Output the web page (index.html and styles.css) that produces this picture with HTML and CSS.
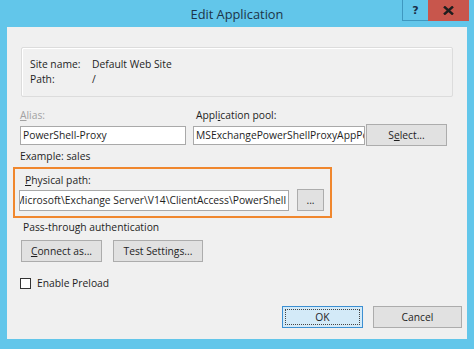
FILE: index.html
```html
<!DOCTYPE html>
<html lang="en">
<head>
  <meta charset="UTF-8" />
  <title>Edit Application</title>
  <link rel="stylesheet" href="styles.css">
</head>
<body>
  <div class="window">
    <!-- title bar -->
    <div class="titlebar">
      <span></span>
      <span class="title">Edit Application</span>
      <div class="controls">
        <button class="ctl help">?</button>
        <button class="ctl close">
          <svg width="11" height="9" viewBox="0 0 11 9"><path d="M1 0.5 L10 8.5 M10 0.5 L1 8.5" stroke="#1e1e1e" stroke-width="2.4"/></svg>
        </button>
      </div>
    </div>

    <div class="client">
      <!-- site info -->
      <div class="group">
        <div class="info-row"><span class="info-key">Site name:</span><span>Default Web Site</span></div>
        <div class="info-row"><span class="info-key">Path:</span><span>/</span></div>
      </div>

      <div class="alias-grid">
        <label class="lbl disabled"><u>A</u>lias:</label>
        <label class="lbl pool-lbl">Appl<u>i</u>cation pool:</label>
        <span></span>
        <div class="textbox alias-box">PowerShell-Proxy</div>
        <div class="textbox pool-box">MSExchangePowerShellProxyAppPool</div>
        <button class="btn select-btn">S<u>e</u>lect...</button>
      </div>
      <div class="hint">Example: sales</div>

      <!-- highlighted -->
      <div class="highlight">
        <label class="lbl"><u>P</u>hysical path:</label>
        <div class="path-row">
          <div class="textbox path-box"><span class="path-text">C:\Program Files\Microsoft\Exchange Server\V14\ClientAccess\PowerShell</span></div>
          <button class="btn browse-btn">...</button>
        </div>
      </div>

      <div class="lbl pass-lbl">Pass-through authentication</div>
      <div class="btn-row">
        <button class="btn connect-btn"><u>C</u>onnect as...</button>
        <button class="btn test-btn">Test Settings...</button>
      </div>

      <label class="check-row"><span class="checkbox"></span>Enable Preload</label>

      <div class="footer-row">
        <button class="btn ok-btn"><span class="focus">OK</span></button>
        <button class="btn cancel-btn">Cancel</button>
      </div>
    </div>
  </div>
</body>
</html>
```

FILE: styles.css
```css
body {
  margin: 0;
  font-family: 'Open Sans', 'Noto Sans', sans-serif;
  font-size: 10.3px;
  color: #1e1e1e;
  background: #fff;
}

.window {
  width: 474px;
  height: 349px;
  box-sizing: border-box;
  background: #62c6ea;
  padding: 0 7px 10px 7px;
  display: flex;
  flex-direction: column;
}

.titlebar {
  height: 27px;
  display: grid;
  grid-template-columns: 1fr auto 1fr;
  align-items: start;
}

.title {
  font-size: 12.8px;
  color: #1c3448;
  padding-top: 5px;
}

.controls {
  justify-self: end;
  display: flex;
  margin-right: -2px;
}

.ctl {
  height: 21px;
  border: none;
  padding: 0;
  display: flex;
  align-items: center;
  justify-content: center;
  font-family: 'DejaVu Sans', sans-serif;
  font-weight: bold;
  font-size: 11px;
}

.help {
  width: 26px;
  background: #62c6ea;
  color: #1a2f48;
  border-left: 1px solid #3f98c0;
  border-bottom: 1px solid #3f98c0;
}

.close {
  width: 41px;
  background: #c8564c;
}

.client {
  flex: 1;
  background: #f0f0f0;
  display: flex;
  flex-direction: column;
  padding: 0 5px 0 13px;
}

.group {
  margin: 20px 0 0 1px;
  width: 432px;
  height: 50px;
  box-sizing: border-box;
  border: 1px solid #dcdcdc;
  box-shadow: inset 1px 1px 0 #fff;
  border-radius: 2px;
  padding: 9px 0 0 8px;
}

.info-row {
  display: flex;
  line-height: 15px;
}

.info-key {
  width: 62px;
}

.lbl {
  line-height: 15px;
}

.lbl.disabled {
  color: #a2a2a2;
}

.alias-grid {
  margin-top: 11px;
  display: grid;
  grid-template-columns: 166px 172px 75px;
  column-gap: 7px;
  row-gap: 1px;
  align-items: center;
}

.pool-lbl {
  margin-left: 3px;
}

.textbox {
  height: 19px;
  box-sizing: border-box;
  background: #fff;
  border: 1px solid #a9a9a9;
  padding: 0 2px;
  line-height: 17px;
  white-space: nowrap;
  overflow: hidden;
}

.select-btn {
  margin-left: -6px;
}

.btn {
  height: 22px;
  box-sizing: border-box;
  border: 1px solid #acacac;
  background: #e1e1e1;
  font-family: inherit;
  font-size: 10.3px;
  color: #1e1e1e;
  padding: 0;
}

.hint {
  line-height: 15px;
  margin-top: 3px;
}

.highlight {
  margin: 3px 0 0 -7px;
  width: 319px;
  height: 51px;
  box-sizing: border-box;
  border: 2px solid #f0872e;
  padding: 4px 0 0 4px;
  display: flex;
  flex-direction: column;
}

.highlight .lbl {
  margin-left: 6px;
}

.path-row {
  margin-top: 1px;
  display: flex;
  align-items: center;
  gap: 8px;
}

.path-box {
  width: 270px;
  height: 21px;
  direction: rtl;
  line-height: 19px;
}

.path-text {
  direction: ltr;
  unicode-bidi: bidi-override;
}

.browse-btn {
  width: 27px;
  height: 22px;
}

.pass-lbl {
  margin: 2px 0 0 3px;
}

.btn-row {
  margin-top: 5px;
  display: flex;
  gap: 11px;
}

.connect-btn {
  width: 81px;
  margin-left: 1px;
}

.test-btn {
  width: 90px;
}

.check-row {
  margin-top: 14px;
  display: flex;
  align-items: center;
  gap: 6px;
  line-height: 15px;
}

.checkbox {
  width: 11px;
  height: 11px;
  box-sizing: border-box;
  border: 1px solid #333;
  background: #fff;
}

.footer-row {
  margin-top: 15px;
  display: flex;
  justify-content: flex-end;
  gap: 10px;
}

.ok-btn {
  width: 81px;
  background: #d3eaf8;
  border-color: #3c8fd2;
  padding: 2px;
}

.focus {
  display: flex;
  align-items: center;
  justify-content: center;
  height: 100%;
  border: 1px dotted #444;
  box-sizing: border-box;
}

.cancel-btn {
  width: 89px;
}
```
